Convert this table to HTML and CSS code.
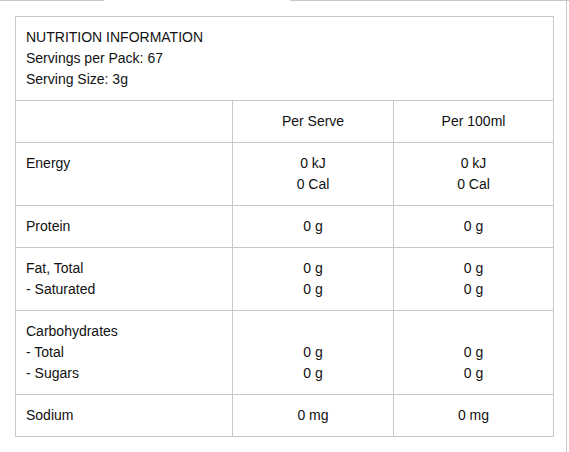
FILE: index.html
```html
<!DOCTYPE html>
<html>
<head>
<meta charset="utf-8">
<link rel="stylesheet" href="styles.css">
</head>
<body>
<div class="frame">
  <div class="edge">
    <span class="edge-line edge-left"></span>
    <span class="edge-gap"></span>
    <span class="edge-line edge-right"></span>
  </div>
  <div class="panel">
    <table class="nutrition">
      <colgroup>
        <col class="col-label">
        <col class="col-serve">
        <col class="col-100">
      </colgroup>
      <tr>
        <td class="title" colspan="3">NUTRITION INFORMATION<br>Servings per Pack: 67<br>Serving Size: 3g</td>
      </tr>
      <tr>
        <td class="label"></td>
        <td class="val">Per Serve</td>
        <td class="val">Per 100ml</td>
      </tr>
      <tr>
        <td class="label">Energy</td>
        <td class="val">0 kJ<br>0 Cal</td>
        <td class="val">0 kJ<br>0 Cal</td>
      </tr>
      <tr>
        <td class="label">Protein</td>
        <td class="val">0 g</td>
        <td class="val">0 g</td>
      </tr>
      <tr>
        <td class="label">Fat, Total<br>- Saturated</td>
        <td class="val">0 g<br>0 g</td>
        <td class="val">0 g<br>0 g</td>
      </tr>
      <tr>
        <td class="label">Carbohydrates<br>- Total<br>- Sugars</td>
        <td class="val">&nbsp;<br>0 g<br>0 g</td>
        <td class="val">&nbsp;<br>0 g<br>0 g</td>
      </tr>
      <tr>
        <td class="label">Sodium</td>
        <td class="val">0 mg</td>
        <td class="val">0 mg</td>
      </tr>
    </table>
  </div>
</div>
</body>
</html>
```
FILE: styles.css
```css
html, body {
  margin: 0;
  padding: 0;
  background: #fff;
}
body {
  font-family: "Liberation Sans", Arial, sans-serif;
  font-size: 14px;
  color: #111;
}
.frame {
  width: 569px;
  height: 452px;
  display: flex;
  flex-direction: column;
}
.edge {
  display: flex;
  height: 1px;
}
.edge-line {
  display: block;
  height: 1px;
  background: #c8c8c8;
}
.edge-left {
  width: 104px;
}
.edge-gap {
  width: 186px;
}
.edge-right {
  flex: 1;
}
.panel {
  flex: 1;
  width: 567px;
  border-right: 1px solid #c8c8c8;
  padding: 15px 0 0 15px;
  box-sizing: border-box;
}
.nutrition {
  border-collapse: collapse;
  width: 538px;
  table-layout: fixed;
}
.col-label {
  width: 217px;
}
.col-serve {
  width: 161px;
}
.col-100 {
  width: 160px;
}
.nutrition td {
  border: 1px solid #c8c8c8;
  padding: 10px;
  line-height: 21px;
  vertical-align: top;
}
.nutrition td.label {
  text-align: left;
}
.nutrition td.val {
  text-align: center;
}
.nutrition td.title {
  text-align: left;
}
```
